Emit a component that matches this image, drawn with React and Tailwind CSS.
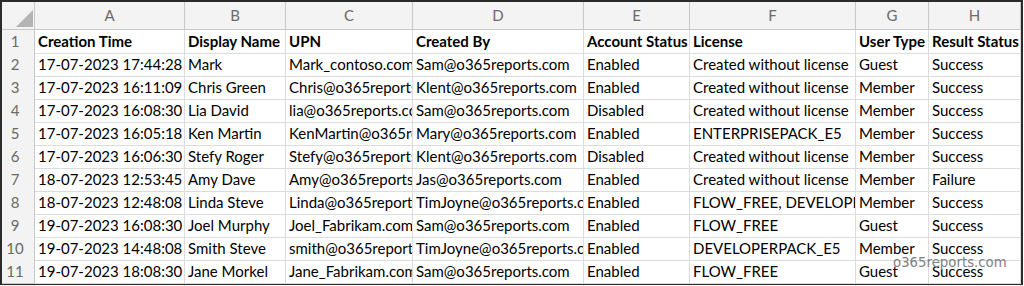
import React from "react";

const cols = "grid-cols-[33px_150px_101px_127px_171px_106px_166px_73px_92px]";

const headers = ["A", "B", "C", "D", "E", "F", "G", "H"];

const rows = [
  ["Creation Time", "Display Name", "UPN", "Created By", "Account Status", "License", "User Type", "Result Status"],
  ["17-07-2023 17:44:28", "Mark", "Mark_contoso.com", "Sam@o365reports.com", "Enabled", "Created without license", "Guest", "Success"],
  ["17-07-2023 16:11:09", "Chris Green", "Chris@o365reports.com", "Klent@o365reports.com", "Enabled", "Created without license", "Member", "Success"],
  ["17-07-2023 16:08:30", "Lia David", "lia@o365reports.com", "Sam@o365reports.com", "Disabled", "Created without license", "Member", "Success"],
  ["17-07-2023 16:05:18", "Ken Martin", "KenMartin@o365reports.com", "Mary@o365reports.com", "Enabled", "ENTERPRISEPACK_E5", "Member", "Success"],
  ["17-07-2023 16:06:30", "Stefy Roger", "Stefy@o365reports.com", "Klent@o365reports.com", "Disabled", "Created without license", "Member", "Success"],
  ["18-07-2023 12:53:45", "Amy Dave", "Amy@o365reports.com", "Jas@o365reports.com", "Enabled", "Created without license", "Member", "Failure"],
  ["18-07-2023 12:48:08", "Linda Steve", "Linda@o365reports.com", "TimJoyne@o365reports.com", "Enabled", "FLOW_FREE, DEVELOPERPACK_E5", "Member", "Success"],
  ["19-07-2023 16:08:30", "Joel Murphy", "Joel_Fabrikam.com", "Sam@o365reports.com", "Enabled", "FLOW_FREE", "Guest", "Success"],
  ["19-07-2023 14:48:08", "Smith Steve", "smith@o365reports.com", "TimJoyne@o365reports.com", "Enabled", "DEVELOPERPACK_E5", "Member", "Success"],
  ["19-07-2023 18:08:30", "Jane Morkel", "Jane_Fabrikam.com", "Sam@o365reports.com", "Enabled", "FLOW_FREE", "Guest", "Success"],
];

export default function App() {
  return (
    <div className="w-[1024px] h-[286px] bg-white overflow-hidden font-['Lato','Liberation_Sans',sans-serif] text-[15px] text-black relative">
      <div className="w-[1023px] border-2 border-[#2b2b2b] bg-white">
        {/* column header row */}
        <div className={`grid ${cols} h-[28px] bg-[#f3f3f3]`}>
          <div className="relative border-r border-b border-[#c8c8c8]">
            <svg className="absolute left-[14px] top-[8px]" width="17" height="17" viewBox="0 0 17 17">
              <polygon points="0,17 17,17 17,0" fill="#b4b4b4" />
            </svg>
          </div>
          {headers.map((h) => (
            <div
              key={h}
              className="flex items-end justify-center pb-[3px] border-r border-b border-[#c8c8c8] text-[#6a6a6a]"
            >
              {h}
            </div>
          ))}
        </div>
        {rows.map((r, i) => (
          <div key={i} className={`grid ${cols} h-[23px]`}>
            <div className="flex items-center justify-center pr-[6px] bg-[#f3f3f3] border-r border-b border-[#c8c8c8] text-[#6a6a6a]">
              {i + 1}
            </div>
            {r.map((c, j) => (
              <div
                key={j}
                className={`flex items-center pl-[3px] overflow-hidden whitespace-nowrap border-r border-b border-[#dcdcdc] ${
                  i === 0 ? "font-bold" : ""
                }`}
              >
                {c}
              </div>
            ))}
          </div>
        ))}
      </div>
      <div className={`grid ${cols} h-[4px] ml-[2px]`}>
        {Array.from({ length: 9 }).map((_, k) => (
          <div key={k} className={`border-r ${k === 0 ? "border-[#c8c8c8] bg-[#f3f3f3]" : "border-[#dcdcdc]"}`} />
        ))}
      </div>
      <div className="absolute left-[893px] top-[256px] text-[13.3px] leading-none text-[#808080] font-['DejaVu_Sans',sans-serif]">
        o365reports.com
      </div>
    </div>
  );
}
